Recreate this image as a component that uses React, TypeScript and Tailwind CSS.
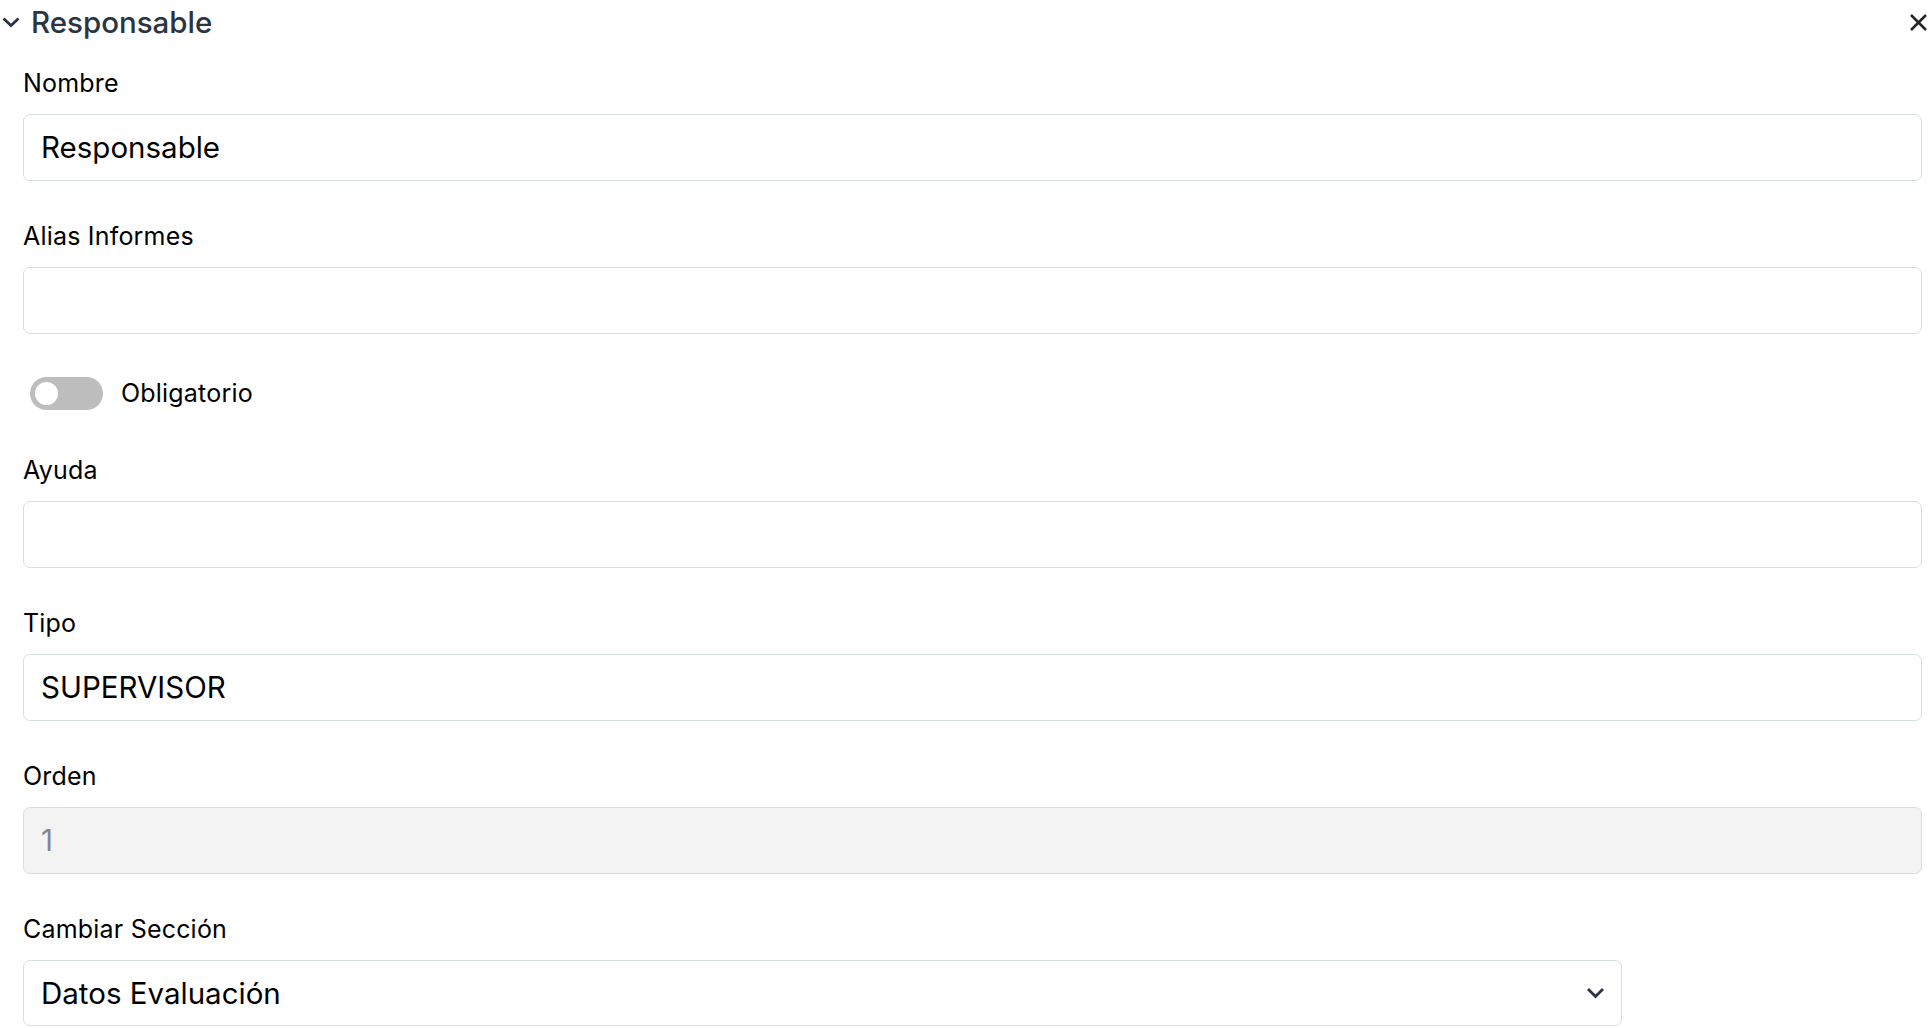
import React from 'react';

const font = { fontFamily: 'Inter, "Noto Sans", sans-serif' };

function Field({ label, value, disabled, gap }: { label: string; value?: string; disabled?: boolean; gap: string }) {
  return (
    <div className={gap}>
      <div className="text-[25px] leading-[32px] tracking-[0.2px] text-black">{label}</div>
      <div
        className={`mt-[15px] h-[67px] flex items-center rounded-[7px] border border-[#d6dfe0] pl-[17px] text-[29.5px] ${
          disabled ? 'bg-[#f3f3f3] text-[#85858f]' : 'bg-white text-black'
        }`}
      >
        {value}
      </div>
    </div>
  );
}

export default function App() {
  return (
    <div className="w-[1930px] h-[1028px] bg-white overflow-hidden" style={font}>
      {/* header */}
      <div className="h-[44px] flex items-center pl-[1px] pr-[2px]">
        <svg width="20" height="12" viewBox="0 0 20 12" className="text-[#2b3445]">
          <path d="M2.5 2.5 L10 9.5 L17.5 2.5" fill="none" stroke="currentColor" strokeWidth="2.8" />
        </svg>
        <span className="ml-[10px] text-[29.5px] font-medium text-[#2b3445]">Responsable</span>
        <div className="flex-1" />
        <svg width="19" height="19" viewBox="0 0 19 19" className="text-[#262626]">
          <path d="M2 2 L17 17 M17 2 L2 17" stroke="currentColor" strokeWidth="2.5" />
        </svg>
      </div>

      <div className="pl-[23px] pr-[8px]">
        <Field gap="mt-[23px]" label="Nombre" value="Responsable" />
        <Field gap="mt-[39px]" label="Alias Informes" />

        <div className="mt-[43px] h-[33px] flex items-center">
          <div className="ml-[7px] w-[73px] h-[33px] rounded-full bg-[#bdbdbd] flex items-center pl-[2px]">
            <div className="w-[29px] h-[29px] rounded-full bg-white border-[3px] border-[#bdbdbd]" />
          </div>
          <span className="ml-[18px] text-[25px] tracking-[0.2px] text-black">Obligatorio</span>
        </div>

        <div className="mt-[44px]">
          <div className="text-[25px] leading-[32px] tracking-[0.2px] text-black">Ayuda</div>
          <div className="mt-[15px] h-[67px] rounded-[7px] border border-[#d6dfe0]" />
        </div>
        <Field gap="mt-[39px]" label="Tipo" value="SUPERVISOR" />
        <Field gap="mt-[39px]" label="Orden" value="1" disabled />

        <div className="mt-[39px]">
          <div className="text-[25px] leading-[32px] tracking-[0.2px] text-black">Cambiar Sección</div>
          <div className="mt-[15px] w-[1599px] h-[66px] flex items-center justify-between rounded-[7px] border border-[#d6dfe0] pl-[17px] pr-[16px] text-[29.5px] text-black">
            <span>Datos Evaluación</span>
            <svg width="19" height="12" viewBox="0 0 19 12" className="text-[#2b3445]">
              <path d="M2 2 L9.5 9.5 L17 2" fill="none" stroke="currentColor" strokeWidth="2.8" />
            </svg>
          </div>
        </div>
      </div>
    </div>
  );
}
